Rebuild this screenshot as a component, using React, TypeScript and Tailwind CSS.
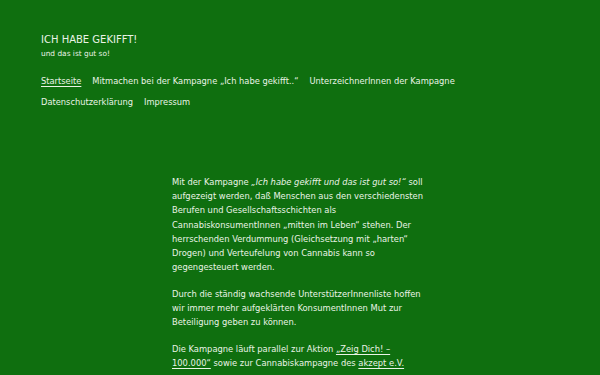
export default function App() {
  return (
    <div
      className="min-h-screen bg-[#0f6f0f] text-[#eaf3e6]"
      style={{ fontFamily: '"DejaVu Sans", sans-serif' }}
    >
      <header className="px-[41px] pt-[33px]">
        <h1 className="text-[10px] leading-[14px]">ICH HABE GEKIFFT!</h1>
        <p className="mt-[2px] text-[7.4px] leading-[10px]">und das ist gut so!</p>
        <nav className="mt-[12px] flex max-w-[480px] flex-wrap gap-x-[11px] text-[8.3px] leading-[21px]">
          <a className="underline underline-offset-2">Startseite</a>
          <a>Mitmachen bei der Kampagne „Ich habe gekifft..“</a>
          <a>UnterzeichnerInnen der Kampagne</a>
          <a>Datenschutzerklärung</a>
          <a>Impressum</a>
        </nav>
      </header>

      <main className="mx-auto mt-[62px] w-[256px] text-[8.35px] leading-[14.2px]">
        <p>
          Mit der Kampagne <em>„Ich habe gekifft und das ist gut so!“</em> soll aufgezeigt
          werden, daß Menschen aus den verschiedensten Berufen und Gesellschaftsschichten als
          CannabiskonsumentInnen „mitten im Leben“ stehen. Der herrschenden Verdummung
          (Gleichsetzung mit „harten“ Drogen) und Verteufelung von Cannabis kann so
          gegengesteuert werden.
        </p>
        <p className="mt-[12.5px]">
          Durch die ständig wachsende UnterstützerInnenliste hoffen wir immer mehr aufgeklärten
          KonsumentInnen Mut zur Beteiligung geben zu können.
        </p>
        <p className="mt-[12.5px]">
          Die Kampagne läuft parallel zur Aktion{' '}
          <a className="underline underline-offset-2">„Zeig Dich! – 100.000“</a> sowie zur
          Cannabiskampagne des <a className="underline underline-offset-2">akzept e.V.</a>
        </p>
      </main>
    </div>
  );
}
